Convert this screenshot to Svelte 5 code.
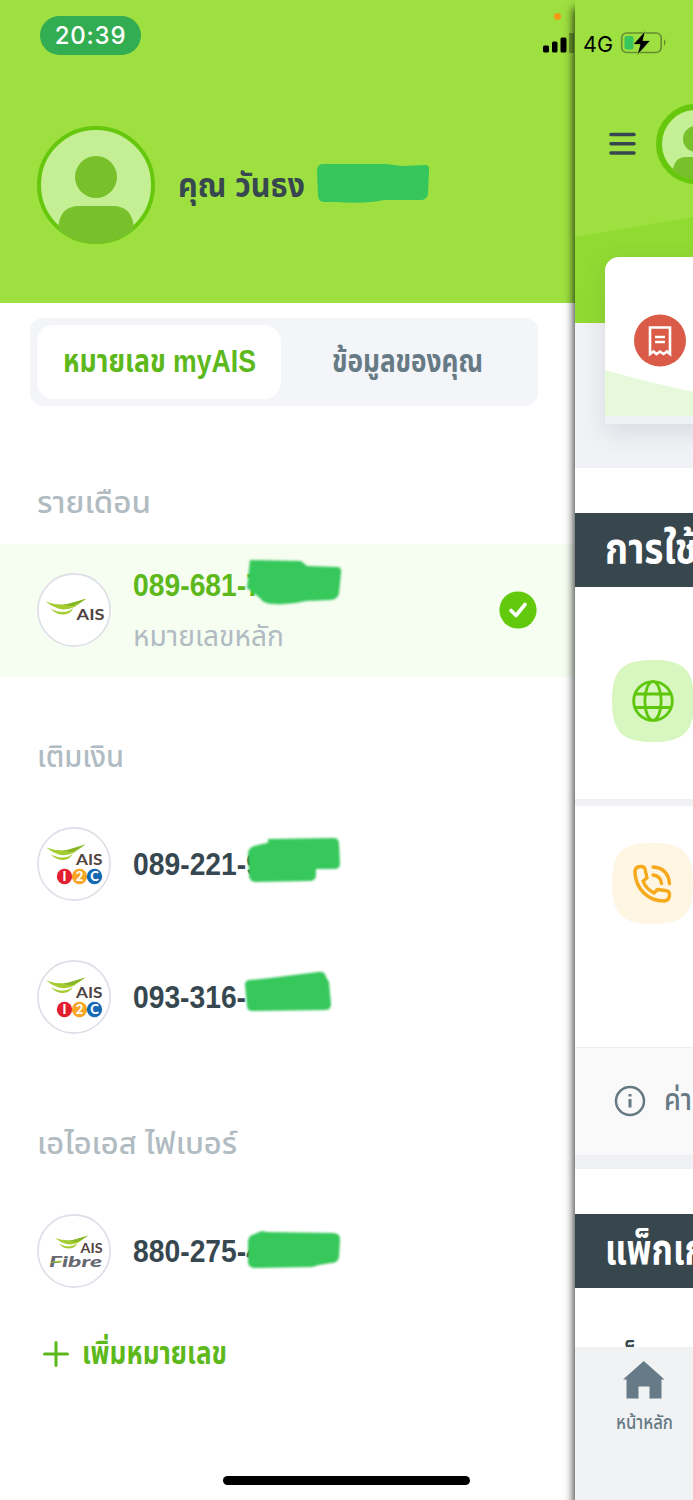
<script lang="ts">
  interface Account {
    readonly number: string;
    readonly width: number;
    readonly brand: "ais" | "12c" | "fibre";
    readonly note?: string;
    readonly selected?: boolean;
    readonly marker: readonly string[];
  }

  interface Group {
    readonly title: string;
    readonly width: number;
    readonly accounts: readonly Account[];
  }

  const GROUPS: readonly Group[] = [
    {
      title: "รายเดือน",
      width: 114,
      accounts: [
        {
          number: "089-681-7",
          width: 129,
          brand: "ais",
          note: "หมายเลขหลัก",
          selected: true,
          marker: ["M250 16L301 17L307 22L338 23Q342 24 341 29L339 49Q338 55 331 56L306 57Q290 61 275 60Q263 60 260 54L247 44Z"],
        },
      ],
    },
    {
      title: "เติมเงิน",
      width: 87,
      accounts: [
        {
          number: "089-221-9",
          width: 129,
          brand: "12c",
          marker: [
            "M268 41L334 40Q339 40 339 46L340 66Q340 71 334 71L268 71Z",
            "M258 47L275 43L312 41Q316 41 316 47V77Q316 83 309 83L255 84Q249 83 249 77L248 55Q249 48 258 47Z",
          ],
        },
        {
          number: "093-316-",
          width: 113,
          brand: "12c",
          marker: ["M250 49L270 47L318 41Q325 40 326 46L329 51L331 73Q331 79 325 79L253 80Q247 80 247 75L245 54Q245 49 250 49Z"],
        },
      ],
    },
    {
      title: "เอไอเอส ไฟเบอร์",
      width: 200,
      accounts: [
        {
          number: "880-275-4",
          width: 129,
          brand: "fibre",
          marker: ["M252 50L262 46L267 47L333 48Q340 48 340 54L339 72Q338 78 331 78L319 80L312 82L254 83Q248 82 248 77L248 56Q249 51 252 50Z"],
        },
      ],
    },
  ];
</script>

{#snippet label(text: string, width: number, size: number, weight = 400, baseline = 30)}
  <svg class="label" {width} height="40" aria-label={text}>
    <text x="0" y={baseline} font-size={size} font-weight={weight} textLength={width} lengthAdjust="spacingAndGlyphs">{text}</text>
  </svg>
{/snippet}

{#snippet person()}
  <svg viewBox="0 0 118 118">
    <defs>
      <clipPath id="face"><circle cx="59" cy="59" r="58.5" /></clipPath>
    </defs>
    <circle cx="59" cy="59" r="57" fill="#c5ef95" stroke="#66c70d" stroke-width="4" />
    <g clip-path="url(#face)" fill="#78c12c">
      <circle cx="59" cy="51" r="21" />
      <path d="M21.500 118V99Q24 80 42 80H76Q94 80 96.500 99V118Z" />
    </g>
  </svg>
{/snippet}

{#snippet wing()}
  <path d="M0 0Q11 4 22 2.500Q32 0 41 -3Q34 2 29 5.500Q22 9 14 7.500Q6 5 0 0Z" fill="#a4cd32" />
  <path d="M22 2.500Q32 0 41 -3Q34 2 28 4.500Q24 5 18 3Z" fill="#86b528" />
  <path d="M5 7Q11 10.500 18 10.500Q24 10 28 6.500Q25 12.500 18 13Q10 13 5 7Z" fill="#a4cd32" />
{/snippet}

{#snippet brandLogo(brand: Account["brand"])}
  <svg class="brand" viewBox="0 0 74 74">
    <circle cx="37" cy="37" r="36.100" fill="#fff" stroke="#dddee7" stroke-width="1.600" />
    {#if brand === "ais"}
      <g transform="translate(8.500 28.500)">{@render wing()}</g>
      <text x="39.500" y="47" font-size="16" textLength="28" lengthAdjust="spacingAndGlyphs">AIS</text>
    {:else if brand === "12c"}
      <g transform="translate(9 20.500) scale(.96)">{@render wing()}</g>
      <text x="39" y="37.500" font-size="15.500" textLength="26.500" lengthAdjust="spacingAndGlyphs">AIS</text>
      <circle cx="27.500" cy="49.500" r="7.700" fill="#e31e2e" />
      <circle cx="42.500" cy="49.500" r="7.700" fill="#f8a526" />
      <circle cx="57.500" cy="49.500" r="7.700" fill="#1569b3" />
      <g class="digits" font-size="13" text-anchor="middle">
        <text x="27.500" y="54">I</text>
        <text x="42.500" y="54">2</text>
        <text x="57.500" y="54">C</text>
      </g>
    {:else}
      <g transform="translate(18 24) scale(.81)">{@render wing()}</g>
      <text x="43.500" y="39" font-size="13" textLength="22" lengthAdjust="spacingAndGlyphs">AIS</text>
      <text class="fibre" x="12" y="53" font-size="15" textLength="53" lengthAdjust="spacingAndGlyphs">Fibre</text>
      <path d="M12 49.500Q16 46.500 25 46.500L24 48.500Q18 47.500 12 49.500Z" fill="#a7ce38" />
    {/if}
  </svg>
{/snippet}

<div class="screen">
  <aside class="drawer">
    <header class="profile">
      <span class="portrait">{@render person()}</span>
      <span class="name">{@render label("คุณ วันธง", 127, 34, 700)}</span>
      <svg class="name-marker" width="116" height="44">
        <path d="M6 2L70 2L86 4L109 3Q114 3 113 9L112 32Q111 38 104 38L68 38Q50 42 20 40L8 40Q3 40 2 34L1 9Q1 3 6 2Z" />
      </svg>
    </header>

    <nav class="tabs">
      <button class="tab active" type="button">{@render label("หมายเลข myAIS", 193, 31, 700, 31)}</button>
      <button class="tab" type="button">{@render label("ข้อมูลของคุณ", 151, 31, 700, 31)}</button>
    </nav>

    {#each GROUPS as group}
      <section class="group">
        <h2>{@render label(group.title, group.width, 31, 500)}</h2>
        {#each group.accounts as account}
          <div class="account" class:selected={account.selected}>
            {@render brandLogo(account.brand)}
            <div class="lines">
              <span class="number">{@render label(account.number, account.width, 32, 700, 31)}</span>
              {#if account.note}
                <span class="note">{@render label(account.note, 151, 29)}</span>
              {/if}
            </div>
            {#if account.selected}
              <svg class="check" viewBox="0 0 38 38">
                <circle cx="19" cy="19" r="18.600" fill="#62c90d" />
                <path d="M12 19.500L17 24.500L26 13.500" fill="none" stroke="#fff" stroke-width="3.600" stroke-linecap="round" stroke-linejoin="round" />
              </svg>
            {/if}
            <svg class="marker" width="575" height="133">
              {#each account.marker as stroke}
                <path d={stroke} />
              {/each}
            </svg>
          </div>
        {/each}
      </section>
    {/each}

    <button class="add" type="button">
      <svg width="26" height="26" viewBox="0 0 26 26">
        <path d="M13 1.500V24.500M1.500 13H24.500" stroke="#5db81c" stroke-width="3" stroke-linecap="round" />
      </svg>
      {@render label("เพิ่มหมายเลข", 145, 31, 700)}
    </button>
  </aside>

  <main class="page">
    <div class="hero">
      <svg class="hill" width="118" height="106">
        <path d="M0 20L118 0V106H0Z" fill="#91da31" />
      </svg>
      <div class="topbar">
        <svg width="27" height="24" viewBox="0 0 27 24">
          <path d="M2 2.500H25M2 11.700H25M2 21H25" stroke="#37474f" stroke-width="3.600" stroke-linecap="round" />
        </svg>
        <svg width="80" height="80" viewBox="0 0 80 80">
          <circle cx="40" cy="40" r="37" fill="#c5ef95" stroke="#66c70d" stroke-width="6" />
          <circle cx="40" cy="35" r="13" fill="#78c12c" />
          <path d="M17 67V64Q20 53 29 53H51Q60 53 63 64V67Q40 84 17 67Z" fill="#78c12c" />
        </svg>
      </div>
      <div class="card">
        <svg width="150" height="159">
          <path d="M0 113Q45 126 89 135L150 145V159H0Z" fill="#e6f9da" />
          <circle cx="55" cy="83.500" r="26" fill="#da5b48" />
          <path d="M45 70.500H65V97L62 94.500L58.500 97L55 94.500L51.500 97L48.500 94.500L45 97Z" fill="none" stroke="#fff" stroke-width="2.600" />
          <path d="M50 80H60M50 85H60" stroke="#fff" stroke-width="2.400" />
        </svg>
      </div>
    </div>

    <h3 class="band usage">{@render label("การใช้", 92, 43, 700, 33)}</h3>

    <div class="service">
      <svg width="82" height="82" viewBox="0 0 82 82">
        <path d="M41 0C72 0 82 10 82 41S72 82 41 82S0 72 0 41S10 0 41 0Z" fill="#d8f6bf" />
        <g fill="none" stroke="#5ec60b" stroke-width="2.800">
          <circle cx="41" cy="41" r="19.300" />
          <ellipse cx="41" cy="41" rx="8.200" ry="19.300" />
          <path d="M23 34H59M23 47.500H59" />
        </g>
      </svg>
    </div>
    <div class="service call">
      <svg width="82" height="82" viewBox="0 0 82 82">
        <path d="M40.500 0C71 0 81 10 81 40.500S71 81 40.500 81S0 71 0 40.500S10 0 40.500 0Z" fill="#fff5e3" />
        <g fill="none" stroke="#f5a91b" stroke-width="3.400" stroke-linecap="round" stroke-linejoin="round">
          <path d="M28 23.500Q22.500 24 23 30C24 46 36 58 52 58Q58 57.500 57.500 50.500Q57 48 53 47.500L45.500 46.500L42 50Q34 46 31 38L35 35L33 26Q32 23 28 23.500Z" />
          <path d="M41 32Q49 33 49.500 40.500M41 24Q56 25 57.500 40.500" />
        </g>
      </svg>
    </div>

    <div class="info">
      <svg width="32" height="32" viewBox="0 0 32 32">
        <circle cx="16" cy="16" r="14" fill="none" stroke="#667983" stroke-width="2.500" />
        <path d="M16 14V22.500M16 9V11.500" stroke="#667983" stroke-width="3" />
      </svg>
      {@render label("ค่า", 28, 31, 500, 29)}
    </div>

    <h3 class="band package">{@render label("แพ็กเก", 101, 43, 700, 34)}</h3>
    <div class="peek">{@render label("แพ็กเกจ", 80, 31, 700, 28)}</div>

    <footer class="home">
      <svg width="42" height="38" viewBox="0 0 42 38">
        <path d="M20.800 0L41.500 18.500H38.500V37.500H26.500V25.500H15.500V37.500H3.500V18.500H0Z" fill="#667b87" />
      </svg>
      {@render label("หน้าหลัก", 57, 20, 500, 30)}
    </footer>
  </main>

  <div class="status">
    <span class="clock">20:39</span>
    <svg class="signals" width="150" height="50">
      <circle cx="17.500" cy="6.500" r="3.600" fill="#f39a17" />
      <rect x="3" y="35.500" width="6" height="7" rx="1.500" />
      <rect x="12" y="31.500" width="5.500" height="11" rx="1.500" />
      <rect x="20.500" y="27.500" width="6" height="15" rx="1.500" />
      <path d="M29 23H34V43H29Z" opacity=".3" />
      <text x="43" y="41.500" font-size="22" textLength="30" lengthAdjust="spacingAndGlyphs">4G</text>
      <rect x="81.700" y="23" width="39.500" height="19.500" rx="5" fill="none" stroke="#668d31" stroke-width="1.600" />
      <rect x="84.500" y="26" width="9" height="13.500" rx="2" fill="#36c65c" />
      <path d="M124 29Q127 32.500 124 36Z" fill="#668d31" />
      <path d="M105.500 20.500L93 34.500H100L97 45.500L110.500 30.500H103Z" stroke="#9ee040" stroke-width=".8" />
    </svg>
  </div>

  <span class="home-bar"></span>
</div>

<style>
  :global(body) {
    background: #fff;
  }

  .screen {
    position: relative;
    display: grid;
    grid-template-columns: 575px 118px;
    width: 693px;
    height: 1500px;
    overflow: hidden;
    font-family: "Liberation Sans", "Noto Sans Thai", "Noto Sans", sans-serif;
    color: #37474f;
  }

  h2,
  h3 {
    margin: 0;
  }

  svg {
    display: block;
    flex: none;
  }

  button {
    padding: 0;
    border: 0;
    background: none;
    color: inherit;
    font: inherit;
  }

  .label {
    overflow: visible;
    fill: currentColor;
  }

  .drawer {
    background: #fff;
  }

  .profile {
    position: relative;
    display: flex;
    align-items: center;
    gap: 23px;
    box-sizing: border-box;
    height: 303px;
    padding: 67px 37px 0;
    background: #9ee040;
  }

  .portrait {
    width: 118px;
    height: 118px;
  }

  .name {
    margin-top: 3px;
  }

  .name-marker {
    position: absolute;
    left: 316px;
    top: 162px;
    fill: #36c65c;
    filter: blur(0.7px);
  }

  .tabs {
    display: grid;
    grid-template-columns: 244px 1fr;
    box-sizing: border-box;
    width: 508px;
    height: 88px;
    margin: 15px 0 0 30px;
    padding: 7px;
    border-radius: 13px;
    background: #f4f5f8;
    color: #667a85;
  }

  .tab {
    display: flex;
    align-items: center;
    justify-content: center;
    padding: 0 0 3px 3px;
    border-radius: 17px;
  }

  .tab.active {
    padding-left: 0;
    background: #fff;
    color: #5db81c;
  }

  .group {
    padding-top: 60px;
  }

  .tabs + .group {
    padding-top: 77px;
  }

  .group h2 {
    margin: 0 0 21px 37px;
    color: #b0bbc2;
  }

  .account {
    position: relative;
    display: flex;
    align-items: center;
    gap: 22px;
    box-sizing: border-box;
    height: 133px;
    padding: 0 0 1px 37px;
  }

  .account.selected {
    background: #f6fdf1;
  }

  .brand {
    width: 74px;
    height: 74px;
    font-family: Lato, sans-serif;
    font-weight: 700;
    fill: #51433f;
  }

  .digits {
    fill: #fff;
    font-weight: 900;
  }

  .fibre {
    fill: #666a70;
    font-style: italic;
    font-weight: 900;
  }

  .number {
    color: #37474f;
  }

  .selected .number {
    color: #5db81c;
  }

  .lines {
    display: grid;
    gap: 11px;
  }

  .note {
    color: #b0bbc2;
  }

  .check {
    position: absolute;
    left: 499px;
    top: 47px;
    width: 38px;
    height: 38px;
  }

  .marker {
    position: absolute;
    inset: 0;
    fill: #36c85b;
    filter: blur(0.8px);
  }

  .add {
    display: flex;
    align-items: center;
    gap: 13px;
    margin: 16px 0 0 43px;
    color: #5db81c;
  }

  .page {
    position: relative;
    background: #fff;
    box-shadow: -1px 8px 9px rgb(0 0 0 / 0.85);
  }

  .hero {
    position: relative;
    box-sizing: border-box;
    height: 468px;
    padding-top: 104px;
    overflow: hidden;
    background: linear-gradient(#9ee040 0 323px, #f1f2f5 323px);
  }

  .hill {
    position: absolute;
    left: 0;
    top: 217px;
  }

  .topbar {
    display: flex;
    align-items: center;
    gap: 20px;
    height: 80px;
    padding-left: 34px;
  }

  .card {
    position: relative;
    width: 150px;
    margin: 73px 0 0 30px;
    overflow: hidden;
    border-radius: 14px 0 0 0;
    border-bottom: 8px solid #eff2f5;
    background: #fff;
    box-shadow: 0 8px 24px rgb(80 90 120 / 0.15);
  }

  .band {
    height: 74px;
    padding-left: 30px;
    overflow: hidden;
    box-sizing: border-box;
    background: #38464d;
    color: #fff;
  }

  .usage {
    margin-top: 45px;
    padding-top: 17px;
  }

  .service {
    box-sizing: border-box;
    height: 219px;
    padding: 73px 0 0 37px;
    border-bottom: 7px solid #f0f1f4;
  }

  .service.call {
    height: 241px;
    padding-top: 37px;
    border-bottom: 0;
  }

  .info {
    display: flex;
    align-items: center;
    gap: 18px;
    box-sizing: border-box;
    height: 122px;
    padding: 0 0 2px 39px;
    overflow: hidden;
    border-top: 1px solid #eceef0;
    border-bottom: 14px solid #f0f1f4;
    background: #f9f9fa;
    color: #667983;
  }

  .package {
    margin-top: 45px;
    padding-top: 16px;
  }

  .peek {
    box-sizing: border-box;
    height: 59px;
    padding: 52px 0 0 30px;
    overflow: hidden;
  }

  .home {
    position: relative;
    display: flex;
    flex-direction: column;
    align-items: center;
    height: 153px;
    padding: 14px 0 0 20px;
    box-sizing: border-box;
    background: #f1f2f4;
    color: #667983;
  }

  .status {
    position: absolute;
    inset: 0 0 auto;
  }

  .clock {
    position: absolute;
    left: 40px;
    top: 16px;
    width: 101px;
    height: 39px;
    border-radius: 20px;
    background: #32ad52;
    color: #fff;
    font: 500 24px/39px Inter, sans-serif;
    text-align: center;
    letter-spacing: 0.8px;
  }

  .signals {
    position: absolute;
    left: 540px;
    top: 10px;
    font-family: Inter, sans-serif;
  }

  .home-bar {
    position: absolute;
    left: 223px;
    bottom: 15px;
    width: 247px;
    height: 9px;
    border-radius: 5px;
    background: #000;
  }
</style>
